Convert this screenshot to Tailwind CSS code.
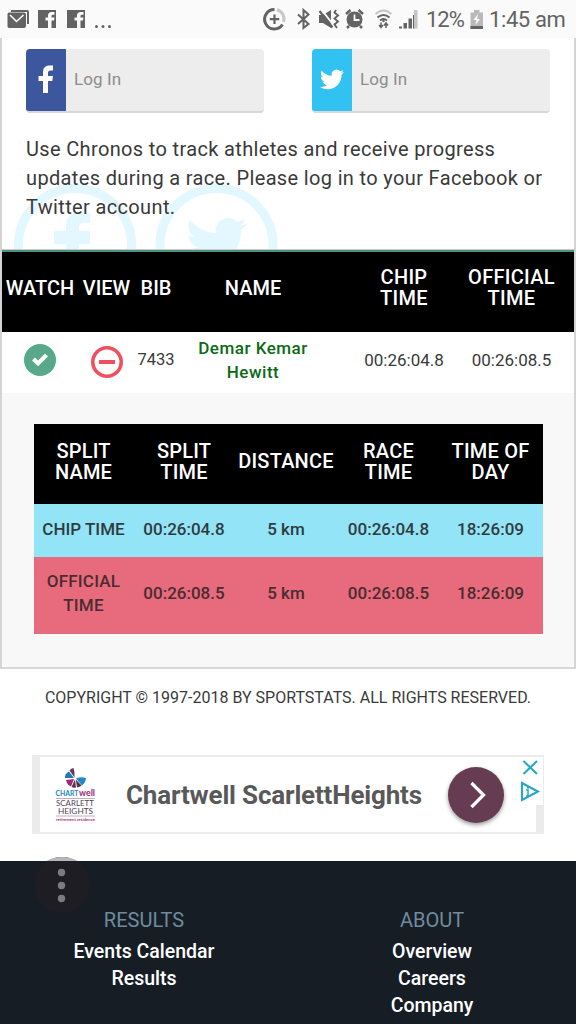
<!DOCTYPE html>
<html lang="en">
<head>
<meta charset="utf-8">
<title>Sportstats Results</title>
<script src="https://cdn.jsdelivr.net/npm/@tailwindcss/browser@4"></script>
</head>
<body class="h-[1024px] w-[576px] overflow-hidden bg-white font-[Roboto,sans-serif] text-[#3a3a3a]">
<header class="flex h-[38px] items-center bg-[#fafafa] text-[#636363]">
  <svg class="h-[38px] w-[292px] shrink-0" viewBox="0 0 292 38" fill="#636363">
    <path d="M11 10H27Q29 10 29 12V24H27V12H11Z"/>
    <path d="M9 12.500H24Q26 12.500 26 14.500V26Q26 28 24 28H9Q7.500 28 7.500 26V14.500Q7.500 12.500 9 12.500Z"/>
    <path d="M10 15L16.500 21.500L23.500 15" fill="none" stroke="#fafafa" stroke-width="1.600"/>
    <g id="fb"><path d="M38 10H56V28H51.500V20.500H54L54.500 17.500H51.500V16Q51.500 14.800 52.800 14.800H54.500V12H51.800Q48 12 48 15.500V17.500H45.500V20.500H48V28H38Z"/></g>
    <use href="#fb" x="29"/>
    <circle cx="96.500" cy="26.500" r="1.500"/><circle cx="103" cy="26.500" r="1.500"/><circle cx="109.500" cy="26.500" r="1.500"/>
    <g fill="none" stroke-width="3"><path d="M277 9.800A9.400 9.400 0 0 1 283.500 22" stroke="#c8c8c8"/><path d="M274.500 9.600A9.700 9.700 0 1 0 282.500 24.500" stroke="#636363"/><path d="M274.500 14.500V24M269.800 19.200H279.200" stroke="#636363" stroke-width="2.200"/></g>
  </svg>
  <svg class="h-[38px] w-[130px] shrink-0" viewBox="292 0 130 38" fill="#636363">
    <path d="M298 14.500L308.500 24L303.500 28V10L308.500 14.500L298 24" fill="none" stroke="#636363" stroke-width="2"/>
    <path d="M319 15H323L331 10V28L323 23H319Z"/><path d="M321 9L335 27" stroke="#fafafa" stroke-width="2"/><path d="M319.500 11L332.500 27.500" stroke="#636363" stroke-width="2.200"/>
    <path d="M336 10L334.500 12.500L338 15.500L334.500 18.500L338 21.500L334.500 24.500L337 28" fill="none" stroke="#636363" stroke-width="1.900"/>
    <circle cx="354.500" cy="19.500" r="8"/><path d="M346 14L350.500 10M363 14L358.500 10M349 26L347 28M360 26L362 28" stroke="#636363" stroke-width="2.500"/><path d="M354.500 14.500V20H359.500" fill="none" stroke="#fafafa" stroke-width="1.800"/>
    <g fill="none" stroke-width="2"><path d="M375.500 14Q383.500 7 391.500 14" stroke="#c4c4c4"/><path d="M377.500 17.500Q383.500 12.500 389.500 17.500M380 20.500Q383.500 17.500 387 20.500" stroke="#636363"/></g>
    <path d="M381 22.500V27M379 25L381 27.500L383 25M386 28V23.500M384 25.500L386 23L388 25.500" fill="none" stroke="#636363" stroke-width="1.500"/><circle cx="383.500" cy="21" r="1.200"/>
    <path d="M399 26.500H402V28.500H399ZM403.500 23H407V28.500H403.500ZM408.500 18.500H412V28.500H408.500ZM413 15H414.500V28.500H413Z"/><path d="M414 10H417.500V28.500H414Z" fill="#c4c4c4"/>
  </svg>
  <span class="ml-[4px] w-[44px] shrink-0 whitespace-nowrap pt-[2px] text-[22px] leading-[38px] tracking-[-1px]">12%</span>
  <svg class="h-[38px] w-[14px] shrink-0" viewBox="470 0 14 38"><path d="M470.500 12.500H474V10H479.500V12.500H483V29H470.500Z" fill="#b9b9b9"/><path d="M470.500 26H483V29H470.500Z" fill="#636363"/><path d="M478 14L473.500 20H476.500L475.500 25L480 19H477Z" fill="#fff"/></svg>
  <span class="ml-[5px] whitespace-nowrap pt-[2px] text-[22px] leading-[38px] tracking-[-0.400px]">1:45 am</span>
</header>

<main class="h-[631px] border-x-2 border-b-2 border-x-[#d4d4d4] border-b-[#d8d8d8]">
  <section class="relative h-[212px] overflow-hidden border-b border-[#c9c9c9]">
    <svg class="absolute left-0 top-[142px] h-[69px] w-[290px]" viewBox="2 180 290 69" fill="#e3f7fe">
      <g fill="none" stroke="#e3f7fe" stroke-width="9"><circle cx="75" cy="245" r="56.500"/><circle cx="216.500" cy="245" r="56.500"/></g>
      <path d="M66 249V244H54V231H66V226Q66 213 79 213H90V223H83Q79 223 79 227V231H90V244H79V249Z"/>
      <g transform="translate(186 212) scale(2.550)"><path d="M23.950 4.570a10 10 0 0 1-2.820.770 4.960 4.960 0 0 0 2.160-2.720c-.950.550-2 .950-3.130 1.180A4.920 4.920 0 0 0 11.780 8.300C7.690 8.100 4.070 6.130 1.640 3.160A4.800 4.800 0 0 0 3.160 9.720c-.8-.02-1.560-.25-2.230-.62v.06A4.920 4.920 0 0 0 4.880 13.980a5 5 0 0 1-2.210.09 4.940 4.940 0 0 0 4.600 3.420A9.870 9.870 0 0 1 0 19.540 13.990 13.990 0 0 0 7.550 21.750c9.050 0 14-7.500 14-13.980 0-.21 0-.42-.02-.63a9.940 9.940 0 0 0 2.420-2.570z"/></g>
    </svg>
    <div class="flex gap-[48px] px-6 pt-[10.500px]">
      <div class="flex h-[64px] w-[238px] overflow-hidden rounded border-b-2 border-[#d8d8d8] bg-[#ededed]">
        <div class="w-[40px] shrink-0 bg-[#3c579e]"><svg class="h-[64px] w-[40px]" viewBox="0 0 40 64"><path d="M17 44V32H12.500V27H17V23.500C17 18.500 19.500 16.500 23.500 16.500H27V21.500H24.800C22.500 21.500 22 22.500 22 24.200V27H27L26.300 32H22V44Z" fill="#fff"/></svg></div>
        <span class="pl-2 text-[17px] leading-[60px] tracking-[0.100px] text-[#8c8c8c]">Log In</span>
      </div>
      <div class="flex h-[64px] w-[238px] overflow-hidden rounded border-b-2 border-[#d8d8d8] bg-[#ededed]">
        <div class="w-[40px] shrink-0 bg-[#32c2f2]"><svg class="h-[64px] w-[40px]" viewBox="0 0 40 64"><path transform="translate(8 18.500)" fill="#fff" d="M23.950 4.570a10 10 0 0 1-2.820.770 4.960 4.960 0 0 0 2.160-2.720c-.950.550-2 .950-3.130 1.180A4.920 4.920 0 0 0 11.780 8.300C7.690 8.100 4.070 6.130 1.640 3.160A4.800 4.800 0 0 0 3.160 9.720c-.8-.02-1.560-.25-2.230-.62v.06A4.920 4.920 0 0 0 4.880 13.980a5 5 0 0 1-2.210.09 4.940 4.940 0 0 0 4.600 3.420A9.870 9.870 0 0 1 0 19.540 13.990 13.990 0 0 0 7.550 21.750c9.050 0 14-7.500 14-13.980 0-.21 0-.42-.02-.63a9.940 9.940 0 0 0 2.420-2.570z"/></svg></div>
        <span class="pl-2 text-[17px] leading-[60px] tracking-[0.100px] text-[#8c8c8c]">Log In</span>
      </div>
    </div>
    <p class="relative whitespace-nowrap pl-6 pt-[22.500px] text-[20px] leading-[29px] tracking-[0.350px]">Use Chronos to track athletes and receive progress<br>updates during a race. Please log in to your Facebook or<br>Twitter account.</p>
  </section>

  <div class="grid h-[82px] grid-cols-[76px_57px_42px_152px_30px_90px_125px] items-center border-t-2 border-[#4c927e] bg-black pb-[8px] text-center text-[20px] font-medium leading-[21px] text-white">
    <span>WATCH</span><span>VIEW</span><span>BIB</span><span>NAME</span><span></span><span class="tracking-[0.300px]">CHIP<br>TIME</span><span class="tracking-[0.300px]">OFFICIAL<br>TIME</span>
  </div>
  <div class="grid h-[61px] grid-cols-[76px_57px_42px_152px_30px_90px_125px] items-center pb-[6px] text-center text-[17px] leading-6">
    <svg class="mx-auto size-8" viewBox="0 0 32 32"><circle cx="16" cy="16" r="16" fill="#58a88b"/><path d="M9.500 15L14 19.500L22.500 11" fill="none" stroke="#fff" stroke-width="4"/></svg>
    <svg class="mx-auto size-8 translate-y-[2px]" viewBox="0 0 32 32"><circle cx="16" cy="16" r="14.200" fill="none" stroke="#ef5060" stroke-width="3.600"/><path d="M8 16H24" stroke="#ef5060" stroke-width="4"/></svg>
    <span class="text-[16.500px]">7433</span>
    <span class="font-medium tracking-[0.500px] text-[#0b6a16]">Demar Kemar<br>Hewitt</span><span></span>
    <span>00:26:04.8</span><span>00:26:08.5</span>
  </div>

  <section class="h-[274px] bg-[#f8f8f8] pl-[31.500px] pt-[31px]">
    <div class="w-[509px] text-center font-medium">
      <div class="grid h-[80px] grid-cols-[100px_101px_103px_102px_102px] items-center bg-black pb-[5px] text-[20px] leading-[21px] tracking-[0.200px] text-white">
        <span>SPLIT<br>NAME</span><span>SPLIT<br>TIME</span><span>DISTANCE</span><span>RACE<br>TIME</span><span>TIME OF<br>DAY</span>
      </div>
      <div class="grid h-[53px] grid-cols-[100px_101px_103px_102px_102px] items-center bg-[#94e4f7] pb-[4px] text-[17px] leading-6 text-[#303b40]">
        <span>CHIP TIME</span><span>00:26:04.8</span><span>5 km</span><span>00:26:04.8</span><span>18:26:09</span>
      </div>
      <div class="grid h-[77px] grid-cols-[100px_101px_103px_102px_102px] items-center bg-[#e76b7c] pb-[5px] text-[17px] leading-6 text-[#4a2c30]">
        <span class="tracking-[0.200px]">OFFICIAL<br>TIME</span><span>00:26:08.5</span><span>5 km</span><span>00:26:08.5</span><span>18:26:09</span>
      </div>
    </div>
  </section>
</main>

<p class="h-[86px] whitespace-nowrap pt-[17px] text-center text-[16px] leading-6">COPYRIGHT © 1997-2018 BY SPORTSTATS. ALL RIGHTS RESERVED.</p>

<aside class="relative ml-8 flex h-[79px] w-[512px] items-center border-y-2 border-l-8 border-r-2 border-[#ebebeb] bg-white">
  <svg class="ml-3 h-[64px] w-[48px] shrink-0" viewBox="52 762 48 64" font-family="Lato,sans-serif">
    <path d="M74.500 776.500L69.500 769.500Q71 767 73.500 767Q75 771 74.500 776.500Z" fill="#6b3558"/><path d="M74 777H65Q64.500 772.500 69 770.500Z" fill="#1c79bc"/><path d="M74 778L66 779Q67 784 71 785.500Z" fill="#a02877"/><path d="M76 777.500Q81 775.500 86 777Q85.500 782 82 784.500Z" fill="#2686c7"/><path d="M75 778.500L71.500 786Q74 787 76 786.500ZM75.800 778.500L77 786.500Q80 786 81.500 784.500Z" fill="#56334f"/>
    <text x="55.500" y="795" font-size="7.500" font-weight="bold" textLength="23" lengthAdjust="spacingAndGlyphs" fill="#1d84bf">CHART</text><text x="79" y="795" font-size="9" textLength="16" lengthAdjust="spacingAndGlyphs" font-weight="bold" fill="#9b2679">well</text>
    <path d="M56 797.500H95M56 815H95" stroke="#b19aae" stroke-width=".8"/>
    <g fill="#554254" font-size="7.500"><text x="56" y="805.200" textLength="38" lengthAdjust="spacingAndGlyphs">SCARLETT</text><text x="58" y="813" textLength="35" lengthAdjust="spacingAndGlyphs">HEIGHTS</text></g>
    <text x="56" y="820" font-size="4" font-weight="bold" textLength="39" lengthAdjust="spacingAndGlyphs" fill="#a33a7a">retirement residence</text>
  </svg>
  <span class="ml-[26px] w-[322px] shrink-0 whitespace-nowrap text-[26px] font-bold leading-8 tracking-[-0.170px] text-[#595959]">Chartwell ScarlettHeights</span>
  <div class="size-[56px] shrink-0 rounded-full bg-[#663c52] shadow-[0_2px_4px_#0006]"><svg viewBox="0 0 56 56"><path d="M23.500 16L35.500 28L23.500 40" fill="none" stroke="#fff" stroke-width="3.200"/></svg></div>
  <div class="absolute bottom-0 right-0 h-[28px] w-[6px] bg-[#ebebeb]"></div>
  <svg class="absolute -right-[1px] top-0 h-[48px] w-[24px] bg-white" viewBox="519 757 24 48" fill="none" stroke="#20a8c6" stroke-width="2"><path d="M523.500 761L537 774M537 761L523.500 774"/><path d="M522 783V800L538 791.500Z"/><path d="M526 790H528V795.500M526 796H530" stroke-width="1.500"/><path d="M527 787.500H529"/></svg>
</aside>

<footer class="relative mt-[27px] h-[163px] bg-[#171d25] pt-[45.500px] text-center text-[19.500px] font-medium leading-[27px] text-white">
  <svg class="absolute -top-[5px] left-[33px] size-[58px]" viewBox="33 856 58 58"><circle cx="62" cy="885" r="28" fill="#1e1d24"/><path d="M46.500 861Q53 857 62 857T77.500 861Z" fill="#b7b7b9"/><g fill="#7c7c80"><circle cx="61.500" cy="872.500" r="3.700"/><circle cx="61.500" cy="885.500" r="3.700"/><circle cx="61.500" cy="898.500" r="3.700"/></g></svg>
  <div class="grid grid-cols-2">
    <div><h2 class="mb-[4px] text-[20px] font-normal text-[#6f8c9e]">RESULTS</h2><p>Events Calendar</p><p>Results</p></div>
    <div><h2 class="mb-[4px] text-[20px] font-normal text-[#6f8c9e]">ABOUT</h2><p>Overview</p><p>Careers</p><p>Company</p></div>
  </div>
</footer>
</body>
</html>
